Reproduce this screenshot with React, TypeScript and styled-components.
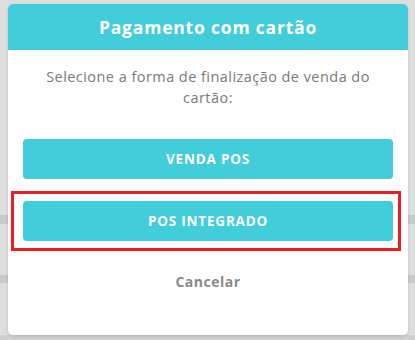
import React, { FC } from 'react';
import styled, { createGlobalStyle } from 'styled-components';

const GlobalStyle = createGlobalStyle`
  html, body {
    margin: 0;
    padding: 0;
  }

  body {
    width: 415px;
    height: 340px;
    overflow: hidden;
    font-family: "Open Sans", "Liberation Sans", sans-serif;
    background:
      linear-gradient(to bottom,
        transparent 0, transparent 215px,
        #c9c9c9 215px, #c9c9c9 224px,
        transparent 224px, transparent 275px,
        #c9c9c9 275px, #c9c9c9 283px,
        transparent 283px, transparent 335px,
        #cfcfcf 335px),
      #dedede;
  }
`;

const Overlay = styled.div`
  padding: 4px 7px 5px 8px;
`;

const Modal = styled.div`
  width: 400px;
  height: 331px;
  background: #fff;
  border-radius: 5px;
  overflow: hidden;
  display: flex;
  flex-direction: column;
  box-shadow: 0 1px 3px rgba(0, 0, 0, 0.15);
`;

const Header = styled.div`
  height: 46px;
  background: #41cdd9;
  display: flex;
  align-items: center;
  justify-content: center;

  h1 {
    margin: 0;
    color: #fff;
    font-size: 17.5px;
    font-weight: 700;
    letter-spacing: 0.8px;
  }
`;

const Body = styled.div`
  flex: 1;
  display: flex;
  flex-direction: column;
  align-items: center;
  padding: 16px 15px 0;
`;

const Message = styled.p`
  margin: 0 0 31px;
  text-align: center;
  color: #7a7a7a;
  font-size: 14.5px;
  letter-spacing: 0.45px;
  line-height: 21px;
  padding: 0 20px;
`;

type HighlightProps = {
  active?: boolean,
};

const Option = styled.div<HighlightProps>`
  align-self: stretch;
  padding: 7px 5px 7px 9px;
  border: 3px solid ${props => props.active ? '#ed1c24' : 'transparent'};
  margin: ${props => props.active ? '2px' : '-10px'} -8px 0 -12px;
`;

const ActionButton = styled.button`
  display: block;
  width: 100%;
  height: 40px;
  border: none;
  border-radius: 4px;
  background: #41cdd9;
  color: #fff;
  font-family: inherit;
  font-size: 13.5px;
  font-weight: 700;
  letter-spacing: 0.8px;
  cursor: pointer;
`;

const CancelButton = styled.button`
  margin-top: 20px;
  border: none;
  background: none;
  color: #8a8a8a;
  font-family: inherit;
  font-size: 14px;
  font-weight: 700;
  letter-spacing: 0.5px;
  cursor: pointer;
`;

const App: FC = () => {
  return (
    <>
      <GlobalStyle />
      <Overlay>
        <Modal>
          <Header>
            <h1>Pagamento com cartão</h1>
          </Header>
          <Body>
            <Message>Selecione a forma de finalização de venda do cartão:</Message>
            <Option>
              <ActionButton>VENDA POS</ActionButton>
            </Option>
            <Option active>
              <ActionButton>POS INTEGRADO</ActionButton>
            </Option>
            <CancelButton>Cancelar</CancelButton>
          </Body>
        </Modal>
      </Overlay>
    </>
  );
};

export default App;
